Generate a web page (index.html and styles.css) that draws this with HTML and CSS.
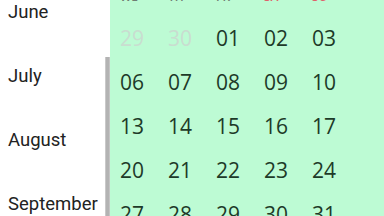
FILE: index.html
```html
<!DOCTYPE html>
<html lang="en">
<head>
  <meta charset="UTF-8">
  <meta name="viewport" content="width=device-width, initial-scale=1.0">
  <title>Month picker</title>
  <link rel="stylesheet" href="styles.css">
</head>
<body>
  <div class="picker">
    <!-- Month list -->
    <ul class="picker-months">
      <li>June</li>
      <li>July</li>
      <li>August</li>
      <li>September</li>
    </ul>
    <div class="picker-rail">
      <div class="picker-thumb"></div>
    </div>

    <!-- Calendar -->
    <div class="picker-calendar">
      <div class="picker-grid">
        <span class="picker-day">WE</span>
        <span class="picker-day">TH</span>
        <span class="picker-day">FR</span>
        <span class="picker-day picker-weekend">SA</span>
        <span class="picker-day picker-weekend">SU</span>

        <span class="picker-date picker-muted">29</span>
        <span class="picker-date picker-muted">30</span>
        <span class="picker-date">01</span>
        <span class="picker-date">02</span>
        <span class="picker-date">03</span>

        <span class="picker-date">06</span>
        <span class="picker-date">07</span>
        <span class="picker-date">08</span>
        <span class="picker-date">09</span>
        <span class="picker-date">10</span>

        <span class="picker-date">13</span>
        <span class="picker-date">14</span>
        <span class="picker-date">15</span>
        <span class="picker-date">16</span>
        <span class="picker-date">17</span>

        <span class="picker-date">20</span>
        <span class="picker-date">21</span>
        <span class="picker-date">22</span>
        <span class="picker-date">23</span>
        <span class="picker-date">24</span>

        <span class="picker-date">27</span>
        <span class="picker-date">28</span>
        <span class="picker-date">29</span>
        <span class="picker-date">30</span>
        <span class="picker-date">31</span>
      </div>
    </div>
  </div>
</body>
</html>
```

FILE: styles.css
```css
* {
  margin: 0;
  padding: 0;
  box-sizing: border-box;
}

body {
  background: #fff;
  width: 384px;
  height: 216px;
  overflow: hidden;
}

.picker {
  display: flex;
  height: 216px;
  overflow: hidden;
}

.picker-months {
  list-style: none;
  width: 105px;
  margin-top: -20px;
  padding-left: 8px;
  font-family: Roboto, "Noto Sans", sans-serif;
  font-size: 18.5px;
  color: #222;
}

.picker-months li {
  height: 64px;
  display: flex;
  align-items: center;
  white-space: nowrap;
}

.picker-rail {
  width: 5px;
  padding-top: 57px;
}

.picker-thumb {
  height: 100%;
  background: #b3b3b3;
  border-left: 1px solid #c9c9c9;
  border-right: 1px solid #c4c4c4;
}

.picker-calendar {
  flex: 1;
  background: #bdfbd4;
  overflow: hidden;
}

.picker-grid {
  display: grid;
  grid-template-columns: repeat(5, 48px);
  grid-template-rows: 30px repeat(5, 44px);
  margin-top: -14px;
  padding-left: 10px;
  font-family: "Open Sans", "Noto Sans", sans-serif;
}

.picker-day {
  display: flex;
  align-items: center;
  font-size: 12px;
  font-weight: 600;
  color: #6f7d73;
  padding-bottom: 9px;
}

.picker-weekend {
  color: #e0606a;
}

.picker-date {
  display: flex;
  align-items: center;
  font-size: 21px;
  color: #1d3a28;
}

.picker-muted {
  color: #c9ddd0;
}
```
